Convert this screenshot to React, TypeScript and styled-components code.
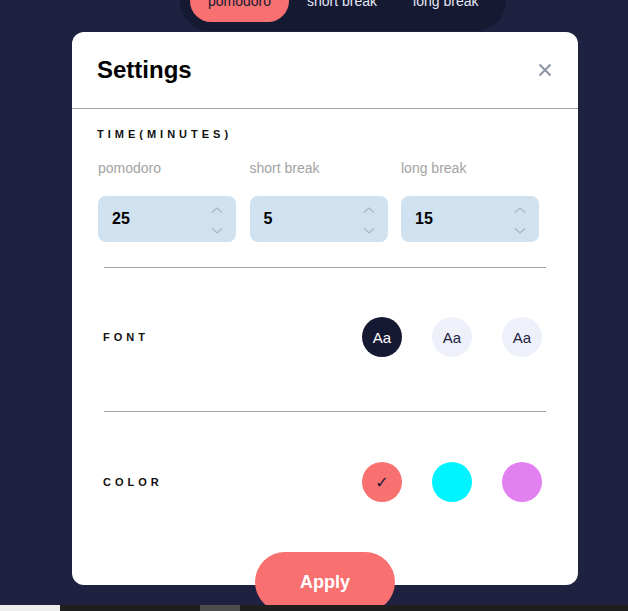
import React, { useState } from 'react';
import styled, { createGlobalStyle } from 'styled-components';

const palette = {
  navy: '#1e213f',
  deepNavy: '#161932',
  coral: '#f87070',
  cyan: '#00f4ff',
  violet: '#e280f2',
  inputBg: '#d0e2f0',
  lightCircle: '#eff1fa',
  grayText: '#a3a3a3',
  line: '#a0a0a0',
};

const GlobalStyle = createGlobalStyle`
  * { box-sizing: border-box; }
  body {
    margin: 0;
    background: ${palette.navy};
    font-family: "Liberation Sans", Arial, sans-serif;
    overflow: hidden;
  }
`;

const Page = styled.div`
  width: 628px;
  height: 611px;
  display: flex;
  flex-direction: column;
  align-items: flex-start;
`;

const TabBar = styled.nav`
  display: flex;
  margin: -29px 0 0 180px;
  padding: 9px 10px;
  background: ${palette.deepNavy};
  border-radius: 31px;
`;

const Tab = styled.button<{ $active?: boolean }>`
  height: 42px;
  padding: 0 18px;
  border: none;
  border-radius: 21px;
  font-family: inherit;
  font-size: 14px;
  background: ${(p) => (p.$active ? palette.coral : 'transparent')};
  color: ${(p) => (p.$active ? palette.deepNavy : '#e3e7f5')};
`;

const Modal = styled.section`
  position: relative;
  margin: 1px 0 0 72px;
  width: 506px;
  height: 553px;
  background: #fff;
  border-radius: 12px;
`;

const Header = styled.header`
  height: 77px;
  padding: 0 26px 0 25px;
  display: flex;
  align-items: center;
  justify-content: space-between;
  border-bottom: 1px solid ${palette.line};
`;

const Title = styled.h2`
  margin: 0;
  font-size: 24px;
  font-weight: 700;
  color: #000;
`;

const CloseBtn = styled.button`
  border: none;
  background: none;
  padding: 0;
  width: 14px;
  height: 14px;
  display: flex;
`;

const Body = styled.div`
  padding: 0 25px;
`;

const SectionTitle = styled.h3`
  margin: 19px 0 0;
  font-size: 11px;
  line-height: 13px;
  font-weight: 700;
  letter-spacing: 4px;
  color: #111;
`;

const TimeGrid = styled.div`
  display: grid;
  grid-template-columns: repeat(3, 138px);
  column-gap: 13.5px;
  margin: 19px 0 25px 1px;
`;

const Field = styled.label`
  display: flex;
  flex-direction: column;
  gap: 20px;
`;

const FieldLabel = styled.span`
  font-size: 14px;
  line-height: 16px;
  color: ${palette.grayText};
`;

const NumberBox = styled.div`
  height: 46px;
  border-radius: 8px;
  background: ${palette.inputBg};
  display: flex;
  align-items: center;
  justify-content: space-between;
  padding: 0 13px 0 14px;
  font-size: 16px;
  font-weight: 700;
  color: #000;
`;

const Spinner = styled.div`
  display: flex;
  flex-direction: column;
  gap: 15px;
  padding-top: 2px;
`;

const Divider = styled.hr`
  margin: 0 7px;
  border: none;
  border-top: 1px solid ${palette.line};
`;

const OptionRow = styled.div<{ $top: number }>`
  display: flex;
  align-items: center;
  justify-content: space-between;
  padding: ${(p) => p.$top}px 11px 54px 6px;
`;

const RowLabel = styled.span`
  font-size: 11px;
  font-weight: 700;
  letter-spacing: 4px;
  color: #111;
`;

const Circles = styled.div`
  display: flex;
  gap: 30px;
`;

const FontCircle = styled.button<{ $active?: boolean }>`
  width: 40px;
  height: 40px;
  border-radius: 50%;
  border: none;
  padding: 0;
  font-family: inherit;
  font-size: 15px;
  background: ${(p) => (p.$active ? palette.deepNavy : palette.lightCircle)};
  color: ${(p) => (p.$active ? '#fff' : palette.navy)};
`;

const ColorCircle = styled.button<{ $color: string }>`
  width: 40px;
  height: 40px;
  border-radius: 50%;
  border: none;
  padding: 0;
  background: ${(p) => p.$color};
  color: ${palette.deepNavy};
  font-size: 16px;
  font-family: "DejaVu Sans", sans-serif;
`;

const ApplyBtn = styled.button`
  position: absolute;
  left: 183px;
  bottom: -27px;
  width: 140px;
  height: 60px;
  border: none;
  border-radius: 30px;
  background: ${palette.coral};
  color: #fff;
  font-family: inherit;
  font-size: 18px;
  font-weight: 700;
`;

const BottomStrip = styled.div`
  position: fixed;
  left: 0;
  right: 0;
  bottom: 0;
  height: 6px;
  display: flex;
  background: #1f1f1f;
`;

const StripPart = styled.div<{ $w: number; $bg: string; $ml?: number }>`
  width: ${(p) => p.$w}px;
  margin-left: ${(p) => p.$ml ?? 0}px;
  background: ${(p) => p.$bg};
`;

const Chevron = ({ up }: { up?: boolean }) => (
  <svg width="12" height="6" viewBox="0 0 12 6">
    <path
      d={up ? 'M1 5.5 L6 1 L11 5.5' : 'M1 0.5 L6 5 L11 0.5'}
      fill="none"
      stroke="#a9b4c2"
      strokeWidth="1.2"
    />
  </svg>
);

const times = [
  { label: 'pomodoro', value: 25 },
  { label: 'short break', value: 5 },
  { label: 'long break', value: 15 },
];

const colors = [palette.coral, palette.cyan, palette.violet];

export default function App() {
  const [font, setFont] = useState(0);
  const [color, setColor] = useState(0);

  return (
    <Page>
      <GlobalStyle />
      <TabBar>
        <Tab $active>pomodoro</Tab>
        <Tab>short break</Tab>
        <Tab>long break</Tab>
      </TabBar>
      <Modal>
        <Header>
          <Title>Settings</Title>
          <CloseBtn aria-label="close">
            <svg width="14" height="14" viewBox="0 0 14 14">
              <path d="M1.5 1.5 L12.5 12.5 M12.5 1.5 L1.5 12.5" stroke="#8d95a3" strokeWidth="2" />
            </svg>
          </CloseBtn>
        </Header>
        <Body>
          <SectionTitle>TIME(MINUTES)</SectionTitle>
          <TimeGrid>
            {times.map((t) => (
              <Field key={t.label}>
                <FieldLabel>{t.label}</FieldLabel>
                <NumberBox>
                  {t.value}
                  <Spinner>
                    <Chevron up />
                    <Chevron />
                  </Spinner>
                </NumberBox>
              </Field>
            ))}
          </TimeGrid>
          <Divider />
          <OptionRow $top={49}>
            <RowLabel>FONT</RowLabel>
            <Circles>
              {[0, 1, 2].map((i) => (
                <FontCircle key={i} $active={font === i} onClick={() => setFont(i)}>
                  Aa
                </FontCircle>
              ))}
            </Circles>
          </OptionRow>
          <Divider />
          <OptionRow $top={50}>
            <RowLabel>COLOR</RowLabel>
            <Circles>
              {colors.map((c, i) => (
                <ColorCircle key={c} $color={c} onClick={() => setColor(i)}>
                  {color === i ? '✓' : ''}
                </ColorCircle>
              ))}
            </Circles>
          </OptionRow>
        </Body>
        <ApplyBtn>Apply</ApplyBtn>
      </Modal>
      <BottomStrip>
        <StripPart $w={60} $bg="#eeeeee" />
        <StripPart $w={40} $bg="#4d4d4d" $ml={140} />
      </BottomStrip>
    </Page>
  );
}
